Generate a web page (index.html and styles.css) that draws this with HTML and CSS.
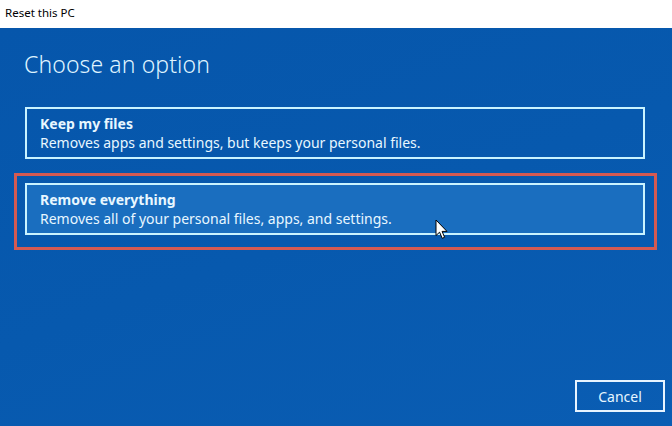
FILE: index.html
```html
<!DOCTYPE html>
<html lang="en">
<head>
<meta charset="utf-8">
<title>Reset this PC</title>
<link rel="stylesheet" href="styles.css">
</head>
<body>
<div class="window">
  <div class="titlebar">Reset this PC</div>
  <div class="content">
    <h1 class="heading">Choose an option</h1>
    <div class="options">
      <button class="option">
        <span class="option-title">Keep my files</span>
        <span class="option-desc">Removes apps and settings, but keeps your personal files.</span>
      </button>
      <div class="highlight">
        <button class="option option-hover">
          <span class="option-title">Remove everything</span>
          <span class="option-desc">Removes all of your personal files, apps, and settings.</span>
        </button>
      </div>
    </div>
    <div class="footer">
      <button class="cancel">Cancel</button>
    </div>
    <svg class="cursor" width="14" height="21" viewBox="0 0 14 21" aria-hidden="true">
      <path d="M1 1 L1 16.5 L4.6 13.2 L7.2 19.3 L9.6 18.3 L7.1 12.4 L12 12.4 Z" fill="#fff" stroke="#000" stroke-width="1" stroke-linejoin="round"/>
    </svg>
  </div>
</div>
</body>
</html>
```
FILE: styles.css
```css
* { box-sizing: border-box; }
html, body { margin: 0; padding: 0; }
body {
  width: 672px;
  height: 426px;
  overflow: hidden;
  font-family: "Noto Sans", "Open Sans", sans-serif;
}
.window {
  width: 672px;
  height: 426px;
  display: flex;
  flex-direction: column;
}
.titlebar {
  height: 28px;
  background: #ffffff;
  color: #000;
  font-size: 11.5px;
  line-height: 26px;
  padding-left: 5px;
}
.content {
  position: relative;
  flex: 1;
  display: flex;
  flex-direction: column;
  padding: 0 27px 14px 25px;
  background: linear-gradient(160deg, #0656ab 0%, #0759ae 50%, #0a5db3 100%);
  color: #e6f6ff;
}
.heading {
  margin: 20px 0 0 -1px;
  font-size: 23px;
  font-weight: 300;
  line-height: 32px;
  color: #dff3ff;
  letter-spacing: 0.1px;
}
.options {
  margin-top: 27px;
  display: flex;
  flex-direction: column;
  gap: 14px;
}
.option {
  display: flex;
  flex-direction: column;
  align-items: flex-start;
  width: 100%;
  height: 52px;
  padding: 5px 13px 0;
  background: transparent;
  border: 2px solid #c9f3ff;
  color: #e8f7ff;
  font-family: inherit;
  text-align: left;
  cursor: default;
}
.option-hover {
  background: #1a6ebf;
}
.option-title {
  font-size: 14px;
  font-weight: 700;
  line-height: 19px;
}
.option-desc {
  font-size: 14px;
  line-height: 19px;
}
.highlight {
  margin: 0 -12px 0 -11px;
  padding: 7px 9px 12px 8px;
  border: 3px solid #d45a52;
}
.footer {
  margin-top: auto;
  display: flex;
  justify-content: flex-end;
  margin-right: -20px;
}
.cancel {
  width: 90px;
  height: 32px;
  background: transparent;
  border: 2px solid #e8f4ff;
  color: #e6f6ff;
  font-family: inherit;
  font-size: 14px;
}
.cursor {
  position: absolute;
  left: 435px;
  top: 191px;
}
```
